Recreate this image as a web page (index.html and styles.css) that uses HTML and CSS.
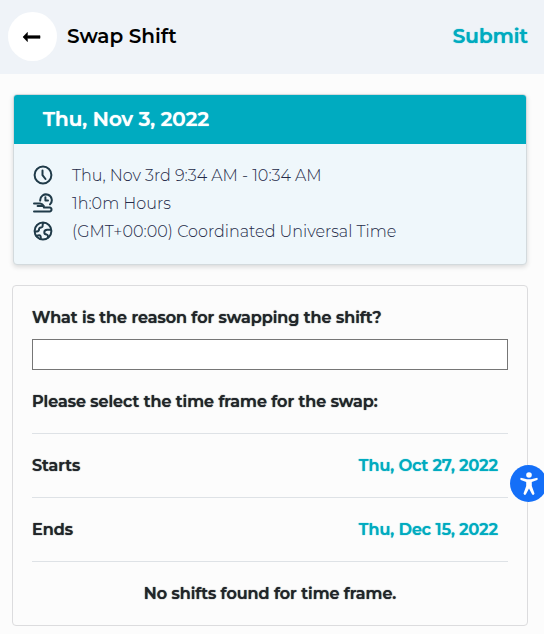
FILE: index.html
```html
<!DOCTYPE html>
<html lang="en">
<head>
<meta charset="utf-8">
<meta name="viewport" content="width=device-width, initial-scale=1">
<title>Swap Shift</title>
<link rel="stylesheet" href="styles.css">
</head>
<body>
<header class="topbar">
  <button class="back" type="button" aria-label="Back">
    <svg width="22" height="12" viewBox="0 0 22 12" aria-hidden="true"><path d="M1 6L5.4 1.4V4.7H18V7.3H5.4V10.6Z" fill="#000" stroke="#000" stroke-width=".6" stroke-linejoin="round"/></svg>
  </button>
  <h1 class="title">Swap Shift</h1>
  <button class="submit" type="submit" form="swap">Submit</button>
</header>
<main class="content">
  <section class="shift">
    <h2 class="shift-date">Thu, Nov 3, 2022</h2>
    <ul class="details">
      <li class="detail">
        <svg class="icon" viewBox="0 0 20 20" aria-hidden="true"><circle cx="10" cy="10" r="8.4"/><path d="M9.5 5.5V10.2L12.5 14"/></svg>
        <span class="detail-main">Thu, Nov 3rd 9:34 AM - 10:34 AM</span>
      </li>
      <li class="detail">
        <svg class="icon" viewBox="0 0 20 20" aria-hidden="true"><path d="M7.2 7.6A5.8 5.8 0 1 1 17 11.4M12.4 4.2V7.4H15M1 10.4H7.2Q9.6 10.6 10.8 12.9H4.6M10.8 14.6H16.6Q18.5 14.8 18.5 16.6T16.6 18.5H1"/></svg>
        <span class="detail-main">1h:0m Hours</span>
      </li>
      <li class="detail">
        <svg class="icon" viewBox="0 0 20 20" aria-hidden="true"><circle cx="10" cy="10" r="8.4"/><path d="M2 10.6H3.8Q6 10.4 6 8.6T8 6.5Q10 6.2 9.6 4.2Q9.6 2.8 10.6 2M18 8.8H14.2Q11.3 9 11.3 11.2T13.8 13.6Q15.2 14 15 16.6M3.4 15Q7 13.2 7.6 15.3T7.5 18"/></svg>
        <span class="detail-main">(GMT+00:00) Coordinated Universal Time</span>
      </li>
    </ul>
  </section>
  <form class="swap" id="swap">
    <label class="question" for="reason">What is the reason for swapping the shift?</label>
    <input class="reason" id="reason" type="text">
    <p class="row">Please select the time frame for the swap:</p>
    <div class="row divided"><span id="starts">Starts</span><button class="date" type="button" aria-describedby="starts">Thu, Oct 27, 2022</button></div>
    <div class="row divided"><span id="ends">Ends</span><button class="date" type="button" aria-describedby="ends">Thu, Dec 15, 2022</button></div>
    <p class="row divided empty">No shifts found for time frame.</p>
  </form>
</main>
<button class="access" type="button" aria-label="Accessibility options">
  <svg width="20" height="26" viewBox="0 0 20 26" aria-hidden="true"><circle cx="10" cy="4" r="2.8" fill="#fff"/><path d="M1.8 6.8Q.5 8 1.8 9L7.2 11V15L4.5 22.5Q5.2 24.6 6.8 23.5L10 17.5L13.2 23.5Q14.8 24.6 15.5 22.5L12.8 15V11L18.2 9Q19.5 8 18.2 6.8L12 8.3H8Z" fill="#fff"/></svg>
</button>
</body>
</html>
```
FILE: styles.css
```css
* {
  box-sizing: border-box;
}

body {
  margin: 0;
  background: #fcfcfc;
  color: #212529;
  font-family: Montserrat, Inter, sans-serif;
  font-size: 16px;
  line-height: 24px;
}

h1, h2, p, ul {
  margin: 0;
  padding: 0;
}

button {
  padding: 0;
  border: 0;
  background: none;
  color: #00abc0;
  font: inherit;
  cursor: pointer;
}

.topbar {
  display: flex;
  align-items: center;
  gap: 10px;
  padding: 12px 16px 13px 8px;
  background: #eff3f8;
}

.back {
  display: flex;
  align-items: center;
  justify-content: center;
  width: 49px;
  height: 49px;
  border-radius: 50%;
  background: #fff;
}

.title,
.submit {
  padding-bottom: 2px;
  font-size: 20px;
  font-weight: 600;
}

.title {
  flex: 1;
  color: #000;
}

.submit,
.shift-date,
.swap,
.date {
  font-weight: 600;
  text-shadow: 0 0 1px currentColor;
}

.content {
  display: flex;
  flex-direction: column;
  gap: 20px;
  padding: 20px 16px 8px 12px;
}

.shift {
  margin: 0 1px;
  overflow: hidden;
  border: 1px solid #d3dadd;
  border-radius: 4px;
  background: #eff7fb;
  box-shadow: 0 2px 5px rgba(0, 0, 0, .14);
}

.shift-date {
  padding: 12px 29px 13px;
  background: #00abc0;
  color: #fff;
  font-size: 20px;
}

.details {
  padding: 17px 19px 19px;
  list-style: none;
}

.detail {
  display: flex;
  align-items: center;
  gap: 19px;
  height: 28px;
  color: #242a48;
  font-weight: 300;
}

.detail-main {
  padding-top: 2px;
}

.icon {
  width: 20px;
  height: 20px;
  fill: none;
  stroke: #203b49;
  stroke-width: 2;
  stroke-linecap: round;
  stroke-linejoin: round;
}

.swap {
  display: flex;
  flex-direction: column;
  padding: 20px 19px 0;
  border: 1px solid #dcdcde;
  border-radius: 4px;
}

.question {
  margin-bottom: 9px;
}

.reason {
  width: 100%;
  height: 31px;
  padding: 2px 6px;
  border: 1px solid #767676;
  background: #fff;
  font: inherit;
}

.row {
  display: flex;
  align-items: center;
  justify-content: space-between;
  height: 63px;
}

.divided {
  height: 64px;
  padding-right: 10px;
  border-top: 1px solid #dee2e6;
}

.empty {
  justify-content: center;
  padding: 0;
}

.access {
  position: fixed;
  top: 465px;
  right: -3px;
  display: flex;
  align-items: center;
  justify-content: center;
  width: 37px;
  height: 37px;
  border-radius: 50%;
  background: #146ff8;
}
```
